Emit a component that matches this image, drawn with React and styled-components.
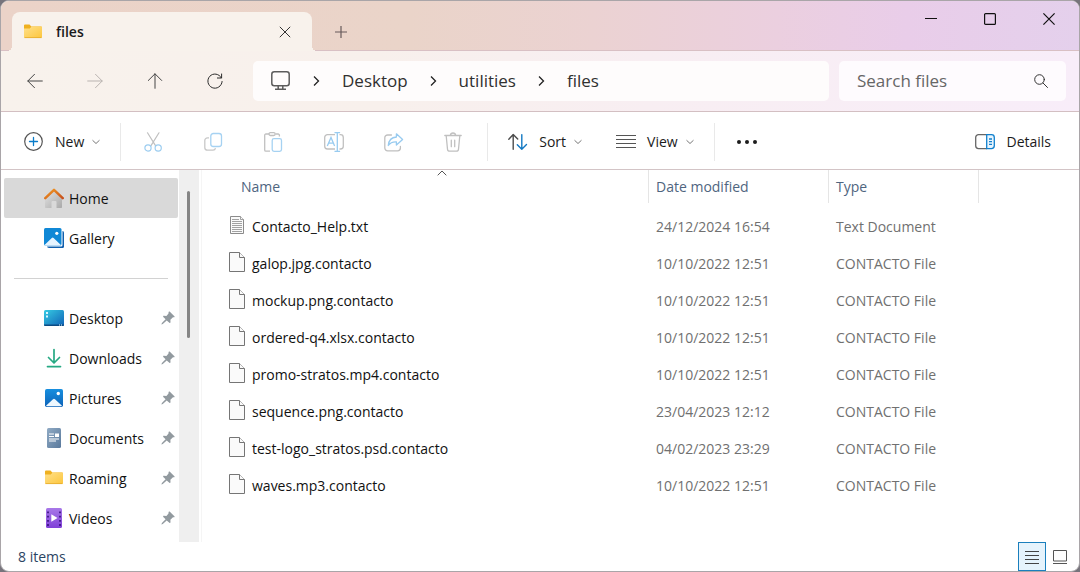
import React, { useState } from 'react'
import styled, { createGlobalStyle } from 'styled-components'

const shortcuts = [
    { name: 'Desktop', icon: DesktopIcon },
    { name: 'Downloads', icon: DownloadsIcon },
    { name: 'Pictures', icon: PicturesIcon },
    { name: 'Documents', icon: DocumentsIcon },
    { name: 'Roaming', icon: FolderIcon },
    { name: 'Videos', icon: VideosIcon },
]

const files = [
    { name: 'Contacto_Help.txt', date: '24/12/2024 16:54', type: 'Text Document' },
    { name: 'galop.jpg.contacto', date: '10/10/2022 12:51', type: 'CONTACTO File' },
    { name: 'mockup.png.contacto', date: '10/10/2022 12:51', type: 'CONTACTO File' },
    { name: 'ordered-q4.xlsx.contacto', date: '10/10/2022 12:51', type: 'CONTACTO File' },
    { name: 'promo-stratos.mp4.contacto', date: '10/10/2022 12:51', type: 'CONTACTO File' },
    { name: 'sequence.png.contacto', date: '23/04/2023 12:12', type: 'CONTACTO File' },
    { name: 'test-logo_stratos.psd.contacto', date: '04/02/2023 23:29', type: 'CONTACTO File' },
    { name: 'waves.mp3.contacto', date: '10/10/2022 12:51', type: 'CONTACTO File' },
]

const path = ['Desktop', 'utilities', 'files']

const actions = [
    { label: 'Cut', icon: CutIcon },
    { label: 'Copy', icon: CopyIcon },
    { label: 'Paste', icon: PasteIcon },
    { label: 'Rename', icon: RenameIcon },
    { label: 'Share', icon: ShareIcon },
    { label: 'Delete', icon: TrashIcon },
]

/* ---------- icons ---------- */

function FolderIcon() {
    return (
        <svg width="20" height="20" viewBox="0 0 20 20">
            <defs>
                <linearGradient id="folder" x1="0" y1="0" x2="1" y2="1">
                    <stop offset="0" stopColor="#ffe08a" />
                    <stop offset="1" stopColor="#fcc63d" />
                </linearGradient>
            </defs>
            <path d="M1 3.500a1 1 0 0 1 1-1h4.500l1.800 2H18a1 1 0 0 1 1 1v3H1z" fill="#efb01f" />
            <path d="M1 6.500h5.800L8.600 4.500H18a1 1 0 0 1 1 1V15a1 1 0 0 1-1 1H2a1 1 0 0 1-1-1z" fill="url(#folder)" />
            <path d="M1.500 15.600h17" stroke="#e5a92c" strokeWidth="0.8" />
        </svg>
    )
}

function HomeIcon() {
    return (
        <svg width="20" height="20" viewBox="0 0 20 20">
            <defs>
                <linearGradient id="wall" x1="0" y1="0" x2="1" y2="1">
                    <stop offset="0" stopColor="#e2e2e2" />
                    <stop offset="1" stopColor="#a9a9a9" />
                </linearGradient>
                <linearGradient id="roof" x1="0" y1="0" x2="1" y2="1">
                    <stop offset="0" stopColor="#f39a22" />
                    <stop offset="1" stopColor="#c7501d" />
                </linearGradient>
            </defs>
            <path d="M10 3.500l8 7.500v8.200a.8.8 0 0 1-.8.8H12.500v-6a1 1 0 0 0-1-1h-3a1 1 0 0 0-1 1v6H1.800a.8.8 0 0 1-.8-.8V11z" fill="url(#wall)" />
            <path d="M1.300 10.200L10 1.900l8.700 8.300" fill="none" stroke="url(#roof)" strokeWidth="2.500" strokeLinecap="round" strokeLinejoin="round" />
        </svg>
    )
}

function GalleryIcon() {
    return (
        <svg width="20" height="20" viewBox="0 0 20 20">
            <path d="M4 3h14.500a1.500 1.500 0 0 1 1.500 1.500v14a1.500 1.500 0 0 1-1.500 1.500H5a2 2 0 0 1-2-2z" fill="#0f5fae" />
            <rect x="0" y="0" width="18.500" height="18.500" rx="1.500" fill="#fff" />
            <rect x="0" y="0" width="17.500" height="17.500" rx="1.500" fill="#1088d6" />
            <path d="M.5 17l7.300-7a1.300 1.300 0 0 1 1.800 0l7.300 7a1.500 1.500 0 0 1-1 .5H1.500a1.500 1.500 0 0 1-1-.5z" fill="#e6f4ff" />
            <circle cx="12.800" cy="5.300" r="1.600" fill="#fff" />
        </svg>
    )
}

function DesktopIcon() {
    return (
        <svg width="20" height="20" viewBox="0 0 20 20">
            <defs>
                <linearGradient id="desk" x1="0" y1="0" x2="1" y2="1">
                    <stop offset="0" stopColor="#36cbe3" />
                    <stop offset="1" stopColor="#1062b6" />
                </linearGradient>
            </defs>
            <rect y="2" width="20" height="16" rx="1.500" fill="url(#desk)" />
            <path d="M0 16.500h20v.5a1 1 0 0 1-1 1H1a1 1 0 0 1-1-1z" fill="#0c4b83" />
            <path d="M2 4h2v2H2zM2 7.500h2v2H2zM15 16.500h1v1h-1zM17 16.500h1v1h-1z" fill="#d9f7ff" />
        </svg>
    )
}

function DownloadsIcon() {
    return (
        <svg width="20" height="20" viewBox="0 0 20 20" fill="none" stroke="#26a983" strokeWidth="1.700" strokeLinecap="round" strokeLinejoin="round">
            <path d="M10 1.500v13.200M4.500 9.500l5.500 5.500 5.500-5.500M3.500 18.600h13" />
        </svg>
    )
}

function PicturesIcon() {
    return (
        <svg width="20" height="20" viewBox="0 0 20 20">
            <defs>
                <linearGradient id="pic" x1="0" y1="0" x2="0" y2="1">
                    <stop offset="0" stopColor="#178fdf" />
                    <stop offset="1" stopColor="#0d62b8" />
                </linearGradient>
            </defs>
            <rect x="1" y="1" width="18" height="18" rx="1.800" fill="url(#pic)" />
            <path d="M2 17.800l7-6.600a1.400 1.400 0 0 1 2 0l7 6.600a1.500 1.500 0 0 1-1 .5H3a1.500 1.500 0 0 1-1-.5z" fill="#eef8ff" />
            <circle cx="14.300" cy="5.500" r="1.700" fill="#fff" />
        </svg>
    )
}

function DocumentsIcon() {
    return (
        <svg width="20" height="20" viewBox="0 0 20 20">
            <defs>
                <linearGradient id="doc" x1="0" y1="0" x2="1" y2="1">
                    <stop offset="0" stopColor="#90aac4" />
                    <stop offset="1" stopColor="#59799c" />
                </linearGradient>
            </defs>
            <rect x="3" width="14" height="20" rx="1.500" fill="url(#doc)" />
            <path d="M5 6h5M5 8.500h5M5 11h10" stroke="#fff" strokeWidth="1.200" />
            <path d="M11 5.400h4v3.700h-4zM5 12.600h7v1H5z" fill="#fff" />
        </svg>
    )
}

function VideosIcon() {
    return (
        <svg width="20" height="20" viewBox="0 0 20 20">
            <defs>
                <linearGradient id="vid" x1="0" y1="0" x2="0" y2="1">
                    <stop offset="0" stopColor="#a878e8" />
                    <stop offset="1" stopColor="#8040d8" />
                </linearGradient>
            </defs>
            <rect x="2" width="16" height="20" rx="1.500" fill="url(#vid)" />
            <path d="M4 3.500v15M16 3.500v15" stroke="#3f1787" strokeWidth="1.800" strokeDasharray="1.800 2.400" />
            <path d="M7.300 6.200l6.200 3.800-6.200 3.800z" fill="#fff" />
        </svg>
    )
}

function PinIcon() {
    return (
        <svg width="14" height="14" viewBox="0 0 14 14">
            <path d="M8.600.6l4.800 4.600c.4.4.1 1-.4 1l-1 .1-2.600 2.500.1 2.500c0 .6-.7.900-1.100.5L5.700 9.400 1.800 13l-1.400.5.500-1.400 3.700-3.800-2.300-2.400c-.4-.4-.1-1.100.5-1.100l2.600.1L7.500 2.400l.1-1.300c0-.6.6-.9 1-.5z" fill="#929a9f" />
        </svg>
    )
}

function Chevron() {
    return (
        <svg width="8" height="8" viewBox="0 0 8 8" fill="none" stroke="#777" strokeLinecap="round">
            <path d="M.8 2.500L4 5.500l3.200-3" />
        </svg>
    )
}

function Crumb() {
    return (
        <svg width="8" height="12" viewBox="0 0 8 12" fill="none" stroke="#222" strokeWidth="1.300">
            <path d="M2 1.500L6.500 6 2 10.500" />
        </svg>
    )
}

function BackIcon() {
    return (
        <svg width="16" height="16" viewBox="0 0 16 16" fill="none" stroke="currentColor" strokeLinecap="round">
            <path d="M.8 8h14.500M7.500 1.300L.8 8l6.700 6.700" />
        </svg>
    )
}

function ForwardIcon() {
    return (
        <svg width="16" height="16" viewBox="0 0 16 16" fill="none" stroke="currentColor" strokeLinecap="round">
            <path d="M.7 8h14.500M8.500 1.300L15.200 8l-6.700 6.700" />
        </svg>
    )
}

function UpIcon() {
    return (
        <svg width="16" height="16" viewBox="0 0 16 16" fill="none" stroke="currentColor" strokeLinecap="round">
            <path d="M8 .8v14.500M1.300 7.500L8 .8l6.700 6.700" />
        </svg>
    )
}

function RefreshIcon() {
    return (
        <svg width="16" height="16" viewBox="0 0 16 16" fill="none" stroke="#2b2b2b" strokeLinecap="round">
            <path d="M14.300 4.800A7.100 7.100 0 1 0 15.100 8.500M14.600 1v4h-4.200" />
        </svg>
    )
}

function MonitorIcon() {
    return (
        <svg width="20" height="20" viewBox="0 0 20 20" fill="none" stroke="#5c5c5c" strokeWidth="1.500">
            <rect x=".8" y=".8" width="17.400" height="14" rx="2.500" />
            <path d="M7.200 15v3M11.800 15v3M4 18.200h11" />
        </svg>
    )
}

function SearchIcon() {
    return (
        <svg width="14" height="14" viewBox="0 0 14 14" fill="none" stroke="#333" strokeLinecap="round">
            <circle cx="5.500" cy="5.500" r="4.800" />
            <path d="M9 9l4.500 4.500" />
        </svg>
    )
}

function NewIcon() {
    return (
        <svg width="20" height="20" viewBox="0 0 20 20" fill="none" strokeLinecap="round">
            <circle cx="9.500" cy="9.500" r="8.800" stroke="#555" strokeWidth="1.200" />
            <path d="M9.500 5.500v8M5.500 9.500h8" stroke="#0a7cc9" strokeWidth="1.300" />
        </svg>
    )
}

function CutIcon() {
    return (
        <svg width="20" height="20" viewBox="0 0 20 20" fill="none" strokeWidth="1.200" strokeLinecap="round">
            <path d="M3.500.8l8 12.800M15 .8L7 13.600" stroke="#c0c0c0" />
            <circle cx="4" cy="16" r="3.100" stroke="#9ccdf0" />
            <circle cx="14.200" cy="16" r="3.100" stroke="#9ccdf0" />
        </svg>
    )
}

function CopyIcon() {
    return (
        <svg width="20" height="20" viewBox="0 0 20 20" fill="none" strokeWidth="1.300">
            <path d="M5 5.800H3.500A2.700 2.700 0 0 0 .8 8.500v7a2.700 2.700 0 0 0 2.700 2.700H9a2.500 2.500 0 0 0 2.500-2" stroke="#c8c8c8" />
            <rect x="6.800" y="1.500" width="10.700" height="13" rx="2.500" stroke="#a6d2f2" />
        </svg>
    )
}

function PasteIcon() {
    return (
        <svg width="20" height="20" viewBox="0 0 20 20" fill="none" strokeWidth="1.300">
            <path d="M5 2H1.900A1.200 1.200 0 0 0 .7 3.200V18a1.200 1.200 0 0 0 1.200 1.200H6M11.500 2h2.700a1.200 1.200 0 0 1 1.200 1.200V4.500" stroke="#c0c0c0" />
            <rect x="5" y=".7" width="6.200" height="2.800" rx="1.400" stroke="#c0c0c0" />
            <rect x="8.200" y="6.700" width="9.300" height="12.600" rx="1.800" stroke="#a6d2f2" />
        </svg>
    )
}

function RenameIcon() {
    return (
        <svg width="20" height="20" viewBox="0 0 20 20" fill="none" strokeWidth="1.300">
            <path d="M11 2.600H3.500A2.800 2.800 0 0 0 .7 5.400v8.800A2.800 2.800 0 0 0 3.500 17H11M15.500 2.600h1a2.800 2.800 0 0 1 2.800 2.800v8.800a2.800 2.800 0 0 1-2.800 2.800h-1" stroke="#c0c0c0" />
            <path d="M3.300 14L7 5.500l3.600 8.500M4.600 11.200h4.800M13.300.8v18.400M10.500.7h5.600M10.500 19.300h5.600" stroke="#98cbf0" />
        </svg>
    )
}

function ShareIcon() {
    return (
        <svg width="20" height="20" viewBox="0 0 20 20" fill="none" strokeWidth="1.300" strokeLinejoin="round">
            <path d="M7.500 3H3.600A2.800 2.800 0 0 0 .8 5.800V16a2.800 2.800 0 0 0 2.800 2.800h10a2.800 2.800 0 0 0 2.800-2.800v-1.500" stroke="#c0c0c0" strokeLinecap="round" />
            <path d="M12.400 1.800l6.200 5.600-6.200 5.700V9.900C8.600 9.700 6 11 4.300 13.500 4.700 8.700 7.700 5.300 12.400 5z" stroke="#98cbf0" />
        </svg>
    )
}

function TrashIcon() {
    return (
        <svg width="20" height="20" viewBox="0 0 20 20" fill="none" stroke="#c0c0c0" strokeWidth="1.300" strokeLinecap="round">
            <path d="M.8 3.500h16.400M6.300 3.500C6.500 1.800 7.500 1 9 1s2.500.8 2.700 2.500M2.200 3.800l1.300 13.400a2.200 2.200 0 0 0 2.200 2h6.600a2.200 2.200 0 0 0 2.200-2l1.300-13.400M7.300 8.200v6.500M10.700 8.200v6.500" />
        </svg>
    )
}

function SortIcon() {
    return (
        <svg width="20" height="20" viewBox="0 0 20 20" fill="none" strokeWidth="1.400" strokeLinecap="round" strokeLinejoin="round">
            <path d="M5.200 17.300V2.800M.8 7.300l4.400-4.700 4.500 4.500" stroke="#4c4c4c" />
            <path d="M13.800 2.600v14.500M9.300 12.800l4.500 4.500 4.700-4.700" stroke="#1278c2" />
        </svg>
    )
}

function ViewIcon() {
    return (
        <svg width="20" height="20" viewBox="0 0 20 20" stroke="#555" strokeWidth="1.100">
            <path d="M0 3.500h20M0 7.500h20M0 11.500h20M0 15.500h20" />
        </svg>
    )
}

function MoreIcon() {
    return (
        <svg width="22" height="20" viewBox="0 0 22 20" fill="#1c1c1c">
            <circle cx="2" cy="10" r="2" />
            <circle cx="10" cy="10" r="2" />
            <circle cx="18" cy="10" r="2" />
        </svg>
    )
}

function DetailsIcon() {
    return (
        <svg width="20" height="20" viewBox="0 0 20 20" fill="none" strokeWidth="1.300">
            <path d="M12 2.700H3.500A2.800 2.800 0 0 0 .7 5.500v8.300a2.800 2.800 0 0 0 2.800 2.800H12" stroke="#666" />
            <path d="M11.700 2.700h4.800a2.800 2.800 0 0 1 2.800 2.800v8.300a2.800 2.800 0 0 1-2.800 2.800h-4.800z" fill="#e8f5fe" stroke="#1180cd" />
            <path d="M14 7h3M14 9.700h3M14 12.400h3" stroke="#1180cd" />
        </svg>
    )
}

function FileIcon() {
    return (
        <svg width="16" height="20" viewBox="0 0 16 20" fill="#fafafa" stroke="#757575">
            <path d="M.5.5h10l5 5v14H.5z" />
            <path d="M10.500.5v5h5" />
        </svg>
    )
}

function TextFileIcon() {
    return (
        <svg width="16" height="20" viewBox="0 0 16 20" fill="#fafafa" stroke="#8b8b8b">
            <path d="M1.500 1.500h10l3 3v14h-13z" />
            <path d="M11.500 1.500v3h3M3 4.500h7M3 6.500h10M3 8.500h10M3 10.500h10M3 12.500h10M3 14.500h10M3 16.500h10" strokeWidth="0.800" />
        </svg>
    )
}

/* ---------- page ---------- */

const App = () => {
    const [place, setPlace] = useState('Home')
    const [layout, setLayout] = useState('details')

    return (
        <>
            <GlobalStyle />
            <Window>
                <TitleBar>
                    <Tab>
                        <FolderIcon />
                        <TabName>files</TabName>
                        <CloseTab aria-label="Close tab">
                            <svg width="12" height="12" viewBox="0 0 12 12" stroke="#333">
                                <path d="M.8.8l10.400 10.400M11.200.8L.8 11.200" />
                            </svg>
                        </CloseTab>
                    </Tab>
                    <AddTab aria-label="New tab">
                        <svg width="12" height="12" viewBox="0 0 12 12" stroke="#66595a" strokeWidth="1.200">
                            <path d="M6 0v12M0 6h12" />
                        </svg>
                    </AddTab>
                    <Controls>
                        <Control aria-label="Minimize">
                            <svg width="12" height="12" viewBox="0 0 12 12" stroke="#111">
                                <path d="M0 5.500h12" />
                            </svg>
                        </Control>
                        <Control aria-label="Maximize">
                            <svg width="12" height="12" viewBox="0 0 12 12" stroke="#111" strokeWidth="1.200" fill="none">
                                <rect x=".6" y=".6" width="10.800" height="10.800" rx="1" />
                            </svg>
                        </Control>
                        <Control aria-label="Close">
                            <svg width="12" height="12" viewBox="0 0 12 12" stroke="#111" strokeWidth="1.200">
                                <path d="M.4.4l11.200 11.200M11.600.4L.4 11.600" />
                            </svg>
                        </Control>
                    </Controls>
                </TitleBar>

                <NavBar>
                    <NavButtons>
                        <NavButton aria-label="Back"><BackIcon /></NavButton>
                        <NavButton aria-label="Forward" disabled><ForwardIcon /></NavButton>
                        <NavButton aria-label="Up"><UpIcon /></NavButton>
                        <NavButton aria-label="Refresh"><RefreshIcon /></NavButton>
                    </NavButtons>
                    <Address aria-label="Path">
                        <MonitorIcon />
                        {path.map(item => (
                            <PathItem key={item}>
                                <Crumb />
                                <PathLink href="#">{item}</PathLink>
                            </PathItem>
                        ))}
                    </Address>
                    <Search>
                        <SearchInput type="text" placeholder="Search files" aria-label="Search files" />
                        <SearchIcon />
                    </Search>
                </NavBar>

                <ToolBar>
                    <Tool>
                        <NewIcon />
                        New
                        <Chevron />
                    </Tool>
                    <Separator />
                    {actions.map(({ label, icon: Icon }) => (
                        <Action key={label} aria-label={label} disabled><Icon /></Action>
                    ))}
                    <Separator />
                    <Tool>
                        <SortIcon />
                        Sort
                        <Chevron />
                    </Tool>
                    <Tool>
                        <ViewIcon />
                        View
                        <Chevron />
                    </Tool>
                    <Separator />
                    <Action aria-label="See more"><MoreIcon /></Action>
                    <Details>
                        <DetailsIcon />
                        Details
                    </Details>
                </ToolBar>

                <Body>
                    <SideBar>
                        <Place $active={place === 'Home'} onClick={() => setPlace('Home')}>
                            <HomeIcon />
                            <span>Home</span>
                        </Place>
                        <Place $active={place === 'Gallery'} onClick={() => setPlace('Gallery')}>
                            <GalleryIcon />
                            <span>Gallery</span>
                        </Place>
                        <Divider />
                        {shortcuts.map(({ name, icon: Icon }) => (
                            <Place key={name} $active={place === name} onClick={() => setPlace(name)}>
                                <Icon />
                                <span>{name}</span>
                                <PinIcon />
                            </Place>
                        ))}
                    </SideBar>
                    <Track>
                        <Thumb />
                    </Track>
                    <Content>
                        <Table>
                            <colgroup>
                                <NameCol />
                                <DateCol />
                                <TypeCol />
                                <col />
                            </colgroup>
                            <thead>
                                <tr>
                                    <Head $first aria-sort="ascending">
                                        Name
                                        <SortMark>
                                            <svg width="10" height="6" viewBox="0 0 10 6" fill="none" stroke="#555">
                                                <path d="M.7 5.300L5 1l4.300 4.300" />
                                            </svg>
                                        </SortMark>
                                    </Head>
                                    <Head>Date modified</Head>
                                    <Head>Type</Head>
                                    <td />
                                </tr>
                            </thead>
                            <tbody>
                                {files.map(file => (
                                    <tr key={file.name}>
                                        <Cell $first>
                                            <FileName>
                                                {file.name.endsWith('.txt') ? <TextFileIcon /> : <FileIcon />}
                                                {file.name}
                                            </FileName>
                                        </Cell>
                                        <Cell>{file.date}</Cell>
                                        <Cell>{file.type}</Cell>
                                        <td />
                                    </tr>
                                ))}
                            </tbody>
                        </Table>
                    </Content>
                </Body>

                <StatusBar>
                    {files.length} items
                    <Layouts>
                        <LayoutButton aria-label="Details view" $active={layout === 'details'} onClick={() => setLayout('details')}>
                            <svg width="14" height="14" viewBox="0 0 14 14" stroke="#444">
                                <path d="M0 1.500h14M0 5.500h14M0 9.500h14M0 13.500h14" />
                            </svg>
                        </LayoutButton>
                        <LayoutButton aria-label="Large icons" $active={layout === 'large'} onClick={() => setLayout('large')}>
                            <svg width="14" height="14" viewBox="0 0 14 14" stroke="#555" fill="none">
                                <path d="M.5.5h13v10.500H.5zM0 13.500h14" />
                            </svg>
                        </LayoutButton>
                    </Layouts>
                </StatusBar>
            </Window>
        </>
    )
}

const GlobalStyle = createGlobalStyle`
    * {
        box-sizing: border-box;
    }

    body {
        margin: 0;
        background: #77747c;
        font-family: 'Open Sans', 'Noto Sans', sans-serif;
        font-size: 14px;
        line-height: 20px;
        color: #1b1b1b;
    }

    button, input {
        font: inherit;
        color: inherit;
        border: 0;
        padding: 0;
        background: none;
    }

    svg {
        display: block;
        flex-shrink: 0;
    }
`

const Window = styled.div`
    display: flex;
    flex-direction: column;
    min-height: 100vh;
    border: 1px solid #a9a5a8;
    border-radius: 9px;
    background: #fff;
    overflow: hidden;
`

const TitleBar = styled.header`
    display: flex;
    height: 50px;
    padding-left: 11px;
    background: linear-gradient(90deg, #ebd3c8 0%, #ead4c9 38%, #ebd2d2 55%, #ebcfdf 72%, #e9cde9 84%, #e4d0ec 100%);
    box-shadow: inset 0 -1px #d9c0c4;
`

const Tab = styled.div`
    position: relative;
    display: flex;
    align-items: center;
    width: 300px;
    margin-top: 11px;
    padding: 0 19px 0 11px;
    border-radius: 8px 8px 0 0;
    background: #f8f2ec;

    &::before, &::after {
        content: '';
        position: absolute;
        bottom: 0;
        width: 5px;
        height: 5px;
    }

    &::before {
        right: 100%;
        background: radial-gradient(circle at 0 0, transparent 5px, #f8f2ec 5px);
    }

    &::after {
        left: 100%;
        background: radial-gradient(circle at 100% 0, transparent 5px, #f8f2ec 5px);
    }
`

const TabName = styled.span`
    flex: 1;
    padding-left: 13px;
    font-weight: 600;
`

const CloseTab = styled.button`
    padding: 2px;
`

const AddTab = styled.button`
    display: flex;
    align-items: center;
    justify-content: center;
    width: 58px;
    margin-top: 12px;
`

const Controls = styled.div`
    display: flex;
    margin: 0 1px 0 auto;
`

const Control = styled.button`
    display: flex;
    align-items: center;
    justify-content: center;
    width: 59px;
    height: 36px;
`

const NavBar = styled.nav`
    display: grid;
    grid-template-columns: auto minmax(0, 1fr) 227px;
    align-items: center;
    height: 61px;
    padding: 0 13px 0 4px;
    background: linear-gradient(90deg, #f8f2ec 0%, #f8f0ec 35%, #f8eef2 60%, #f8edf9 100%);
    border-bottom: 1px solid #d3bfc2;
`

const NavButtons = styled.div`
    display: flex;
    padding-right: 8px;
`

const NavButton = styled.button`
    display: flex;
    align-items: center;
    justify-content: center;
    width: 60px;
    height: 40px;
    color: #444;

    &:disabled {
        color: #b9b3b0;
    }
`

const Address = styled.div`
    display: flex;
    align-items: center;
    height: 40px;
    margin-right: 10px;
    padding-left: 18px;
    border-radius: 5px;
    background: #fefcfc;
`

const PathItem = styled.span`
    display: flex;
    align-items: center;
    gap: 22px;
    padding-left: 21px;
`

const PathLink = styled.a`
    font-size: 17px;
    line-height: 24px;
    color: #303030;
    text-decoration: none;
`

const Search = styled.div`
    display: flex;
    align-items: center;
    height: 40px;
    padding: 0 18px;
    border-radius: 5px;
    background: #fefbfe;
`

const SearchInput = styled.input`
    flex: 1;
    min-width: 0;
    font-size: 17px;
    line-height: 24px;
    outline: none;

    &::placeholder {
        color: #666;
        opacity: 1;
    }
`

const ToolBar = styled.div`
    display: flex;
    align-items: center;
    height: 58px;
    padding: 2px 0 0 6px;
    border-bottom: 1px solid #d3c4c6;
`

const Tool = styled.button`
    display: flex;
    align-items: center;
    gap: 11px;
    height: 40px;
    padding: 0 17px;

    svg:last-child {
        margin-left: -3px;
    }
`

const Action = styled.button`
    display: flex;
    align-items: center;
    justify-content: center;
    width: 60px;
    height: 40px;
`

const Details = styled(Tool)`
    margin-left: auto;
    padding-right: 28px;
`

const Separator = styled.span`
    width: 1px;
    height: 38px;
    margin: 0 3px;
    background: #e9e9e9;
`

const Body = styled.main`
    display: flex;
    flex: 1;
`

const SideBar = styled.aside`
    width: 178px;
    padding: 8px 1px 4px 3px;
`

const Place = styled.button`
    display: flex;
    align-items: center;
    gap: 5px;
    width: 100%;
    height: 40px;
    padding: 0 3px 0 40px;
    border-radius: 2px;
    text-align: left;
    color: #111;
    background: ${props => (props.$active ? '#d9d9d9' : 'transparent')};

    span {
        flex: 1;
        padding-top: 2px;
    }
`

const Divider = styled.hr`
    height: 1px;
    margin: 20px 10px 19px;
    border: 0;
    background: #d2d2d2;
`

const Track = styled.div`
    width: 20px;
    padding: 21px 8px 0;
    background: #efefef;
`

const Thumb = styled.div`
    width: 3px;
    height: 147px;
    border-radius: 2px;
    background: #858585;
`

const Content = styled.section`
    flex: 1;
    min-width: 0;
    margin-left: 2px;
    padding-left: 27px;
    border-left: 1px solid #f5f5f5;
`

const Table = styled.table`
    width: 100%;
    table-layout: fixed;
    border-collapse: separate;
    border-spacing: 0;

    tbody::before {
        content: '';
        display: block;
        height: 5px;
    }
`

const NameCol = styled.col`
    width: 420px;
`

const DateCol = styled.col`
    width: 180px;
`

const TypeCol = styled.col`
    width: 150px;
`

const Head = styled.th`
    position: relative;
    height: 33px;
    padding: 0 0 0 ${props => (props.$first ? '12px' : '7px')};
    border-right: 1px solid #e5e5e5;
    font-weight: 400;
    text-align: left;
    color: #4f6580;
`

const SortMark = styled.span`
    position: absolute;
    top: 0;
    left: 6px;
    right: 0;
    display: flex;
    justify-content: center;
`

const Cell = styled.td`
    height: 37px;
    padding: 0 0 0 ${props => (props.$first ? '0' : '7px')};
    color: ${props => (props.$first ? '#111' : '#707070')};
    white-space: nowrap;
`

const FileName = styled.span`
    display: flex;
    align-items: center;
    gap: 7px;

    svg {
        margin-bottom: 3px;
    }
`

const StatusBar = styled.footer`
    display: flex;
    align-items: center;
    height: 29px;
    padding: 0 5px 0 17px;
    color: #2b4463;
`

const Layouts = styled.div`
    display: flex;
    margin-left: auto;
`

const LayoutButton = styled.button`
    display: flex;
    align-items: center;
    justify-content: center;
    width: 28px;
    height: 29px;
    border: 1px solid ${props => (props.$active ? '#1a7fbd' : 'transparent')};
    background: ${props => (props.$active ? '#e5f3fc' : 'transparent')};
`

export default App
